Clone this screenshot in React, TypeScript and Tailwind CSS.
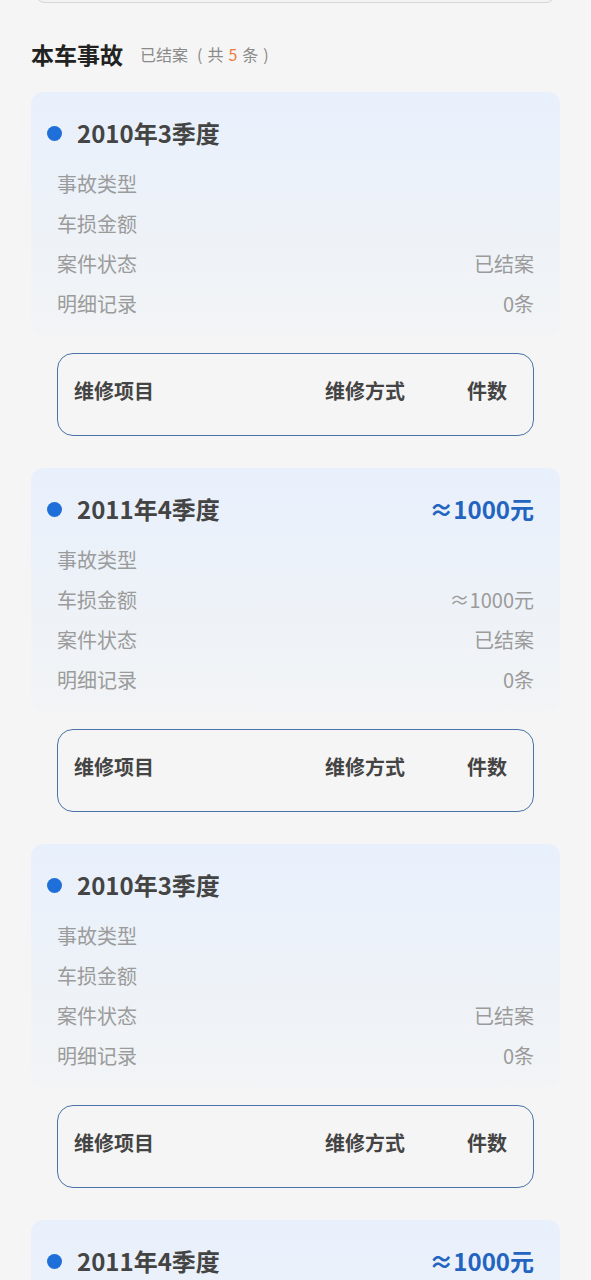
import React from "react";

type Accident = {
  period: string;
  amount?: string;
  type: string;
  status: string;
  records: string;
};

const ACCIDENTS: Accident[] = [
  { period: "2010年3季度", type: "", status: "已结案", records: "0条" },
  { period: "2011年4季度", amount: "≈1000元", type: "", status: "已结案", records: "0条" },
  { period: "2010年3季度", type: "", status: "已结案", records: "0条" },
  { period: "2011年4季度", amount: "≈1000元", type: "", status: "已结案", records: "0条" },
];

// faint watermark positions
const MARKS = [
  { top: 40, left: 220 },
  { top: 330, left: 300 },
  { top: 290, left: 540 },
  { top: 520, left: 180 },
  { top: 760, left: 40 },
  { top: 800, left: 300 },
  { top: 990, left: 220 },
  { top: 1220, left: 540 },
];

const Row = ({ label, value }: { label: string; value?: string }) => (
  <div className="flex items-center justify-between h-[40px] text-[20px] text-[#9b9b9b]">
    <span>{label}</span>
    <span>{value}</span>
  </div>
);

const AccidentCard = ({ item }: { item: Accident }) => (
  <div className="mb-[32px]">
    <div className="rounded-[12px] bg-gradient-to-b from-[#e8f0fc] via-[#edf2f8] to-[#f2f4f6] pt-[26px] pb-[11px] pr-[26px]">
      <div className="flex items-center justify-between h-[30px] pl-[16px]">
        <div className="flex items-center">
          <span className="w-[15px] h-[15px] rounded-full bg-[#1f6fdb]" />
          <span className="ml-[15px] text-[24px] font-bold text-[#444]">{item.period}</span>
        </div>
        {item.amount && (
          <span className="text-[24px] font-bold text-[#2264c0]">{item.amount}</span>
        )}
      </div>
      <div className="mt-[16px] pl-[26px]">
        <Row label="事故类型" value={item.type} />
        <Row label="车损金额" value={item.amount} />
        <Row label="案件状态" value={item.status} />
        <Row label="明细记录" value={item.records} />
      </div>
    </div>
    <div className="mx-[26px] mt-[18px] h-[83px] rounded-[16px] border-[1.5px] border-[#4a74a8] pl-[16px] pr-[26px] pt-[22px]">
      <div className="flex items-center text-[20px] font-bold text-[#444]">
        <span className="flex-1">维修项目</span>
        <span>维修方式</span>
        <span className="ml-[62px]">件数</span>
      </div>
    </div>
  </div>
);

export default function App() {
  return (
    <div
      className="relative min-h-[1280px] overflow-hidden bg-[#f5f5f5]"
      style={{ fontFamily: '"Noto Sans CJK SC", "Noto Sans", sans-serif' }}
    >
      {/* tail of the block above */}
      <div className="mx-[35px] -mt-[20px] h-[23px] rounded-[10px] border border-[#d6d6d6] bg-[#f3f3f3]" />

      <div className="px-[31px]">
        <div className="mt-[35px] flex items-center h-[32px]">
          <span className="text-[23px] font-bold text-[#222]">本车事故</span>
          <span className="ml-[17px] flex items-center gap-[5px] text-[16px] text-[#8a8a8a]">
            <span>已结案</span>
            <span className="ml-[4px]">(</span>
            <span>共</span>
            <span className="text-[#f07c3c]">5</span>
            <span>条</span>
            <span>)</span>
          </span>
        </div>

        <div className="mt-[22px]">
          {ACCIDENTS.map((item, i) => (
            <AccidentCard key={i} item={item} />
          ))}
        </div>
      </div>

      {MARKS.map((m, i) => (
        <span
          key={i}
          className="pointer-events-none absolute -rotate-[30deg] text-[40px] font-bold text-[rgba(0,0,0,0.02)] select-none"
          style={{ top: m.top, left: m.left }}
        >
          车信盟
        </span>
      ))}
    </div>
  );
}
